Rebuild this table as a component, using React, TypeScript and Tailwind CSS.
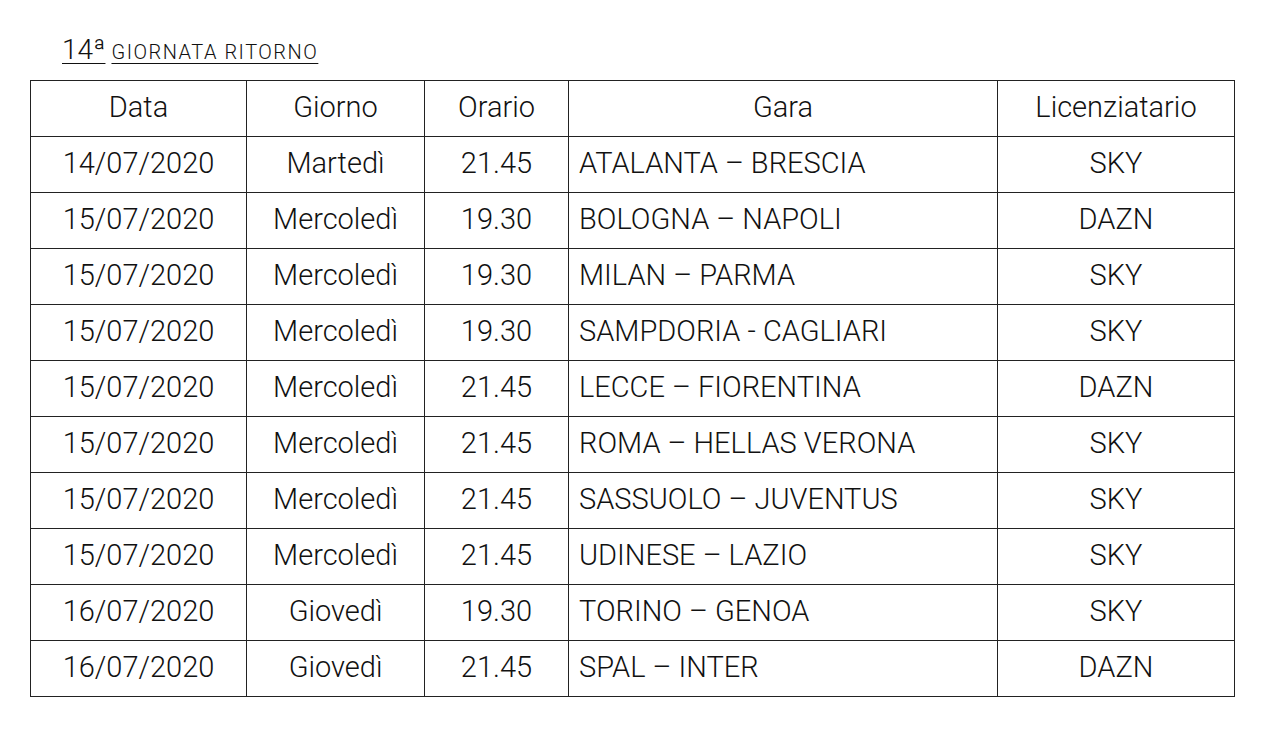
import type React from "react";

const rows = [
    ["14/07/2020", "Martedì", "21.45", "ATALANTA – BRESCIA", "SKY"],
    ["15/07/2020", "Mercoledì", "19.30", "BOLOGNA – NAPOLI", "DAZN"],
    ["15/07/2020", "Mercoledì", "19.30", "MILAN – PARMA", "SKY"],
    ["15/07/2020", "Mercoledì", "19.30", "SAMPDORIA - CAGLIARI", "SKY"],
    ["15/07/2020", "Mercoledì", "21.45", "LECCE – FIORENTINA", "DAZN"],
    ["15/07/2020", "Mercoledì", "21.45", "ROMA – HELLAS VERONA", "SKY"],
    ["15/07/2020", "Mercoledì", "21.45", "SASSUOLO – JUVENTUS", "SKY"],
    ["15/07/2020", "Mercoledì", "21.45", "UDINESE – LAZIO", "SKY"],
    ["16/07/2020", "Giovedì", "19.30", "TORINO – GENOA", "SKY"],
    ["16/07/2020", "Giovedì", "21.45", "SPAL – INTER", "DAZN"],
];

const cell = "border-[1.5px] border-[#222] h-[56px] p-0 pb-[3px] font-light leading-none";

const App: React.FC = () => {
    return (
        <div className="w-[1280px] h-[743px] bg-white text-[#111] font-['Roboto',sans-serif]">
            <div className="pl-[62px] pt-[29px] h-[80px]">
                <span className="underline underline-offset-[4px] decoration-1 font-light">
                    <span className="text-[28px]">14ª</span>
                    <span className="text-[20px] tracking-[1.5px] ml-[6px]">GIORNATA RITORNO</span>
                </span>
            </div>

            <table className="ml-[30px] w-[1205px] border-collapse table-fixed text-[29px]">
                <colgroup>
                    <col className="w-[216px]" />
                    <col className="w-[178px]" />
                    <col className="w-[144px]" />
                    <col className="w-[429px]" />
                    <col className="w-[237px]" />
                </colgroup>
                <thead>
                    <tr>
                        <th className={`${cell} text-center`}>Data</th>
                        <th className={`${cell} text-center`}>Giorno</th>
                        <th className={`${cell} text-center`}>Orario</th>
                        <th className={`${cell} text-center`}>Gara</th>
                        <th className={`${cell} text-center`}>Licenziatario</th>
                    </tr>
                </thead>
                <tbody>
                    {rows.map((r, i) => (
                        <tr key={i}>
                            <td className={`${cell} text-center`}>{r[0]}</td>
                            <td className={`${cell} text-center`}>{r[1]}</td>
                            <td className={`${cell} text-center`}>{r[2]}</td>
                            <td className={`${cell} text-left pl-[10px]`}>{r[3]}</td>
                            <td className={`${cell} text-center`}>{r[4]}</td>
                        </tr>
                    ))}
                </tbody>
            </table>
        </div>
    )
}

export default App
